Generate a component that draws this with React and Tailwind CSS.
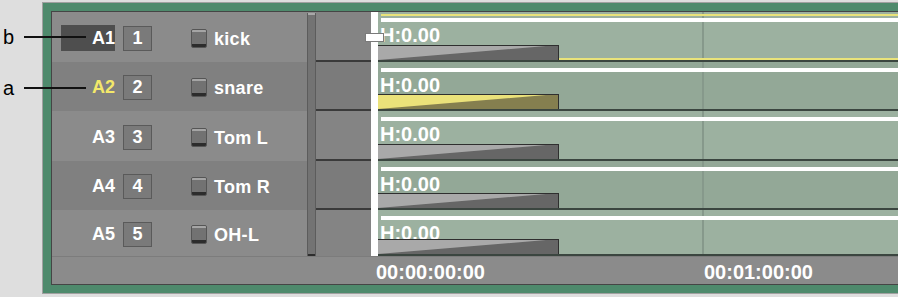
import React from 'react';

const rows = [
  { a: 'A1', n: '1', name: 'kick', h: 'h-[50px]', dark: false, sel: true, yellow: false, focus: true },
  { a: 'A2', n: '2', name: 'snare', h: 'h-[49px]', dark: true, sel: false, yellow: true, focus: false },
  { a: 'A3', n: '3', name: 'Tom L', h: 'h-[50px]', dark: false, sel: false, yellow: false, focus: false },
  { a: 'A4', n: '4', name: 'Tom R', h: 'h-[49px]', dark: true, sel: false, yellow: false, focus: false },
  { a: 'A5', n: '5', name: 'OH-L', h: 'h-[46px]', dark: false, sel: false, yellow: false, focus: false },
];

function FadeBar({ yellow }) {
  const light = yellow ? '#ebe27a' : '#a9a9a9';
  const dark = yellow ? '#857f4f' : '#666666';
  return (
    <div className="w-[181px] h-[15px] border-t border-r border-[#2f2f2f] shrink-0">
      <svg width="180" height="14" viewBox="0 0 180 14" preserveAspectRatio="none" className="block">
        <rect x="0" y="0" width="180" height="14" fill={dark} />
        <polygon points="0,0 0,14 168,0" fill={light} />
      </svg>
    </div>
  );
}

function HeaderRow({ row }) {
  return (
    <div className={`flex items-center pl-[9px] pt-[2px] ${row.h} ${row.dark ? 'bg-[#808080]' : 'bg-[#8b8b8b]'}`}>
      <div className={`w-[54px] h-[26px] flex items-center justify-end text-[18px] font-bold ${row.focus ? 'bg-[#4e4e4e]' : ''} ${row.yellow ? 'text-[#f3e86a]' : 'text-white'}`}>
        {row.a}
      </div>
      <div className="ml-[8px] w-[29px] h-[25px] border border-[#5a5a5a] bg-[#7a7a7a] flex items-center justify-center text-white text-[18px] font-bold">
        {row.n}
      </div>
      <div className="ml-[39px] w-[16px] h-[19px] rounded-[2px] border border-[#555] bg-[#727272] flex flex-col overflow-hidden">
        <div className="h-[2px] bg-[#a5a5a5]" />
        <div className="flex-1" />
        <div className="h-[3px] bg-[#2c2c2c]" />
      </div>
      <div className="ml-[7px] pt-[2px] text-white text-[18px] font-bold tracking-[0.3px]">{row.name}</div>
    </div>
  );
}

function GutterRow({ row, last }) {
  return (
    <div className={`${row.h} ${row.dark ? 'bg-[#7b7b7b]' : 'bg-[#848484]'} ${last ? '' : 'border-b-[2px] border-[#3a3a3a]'}`} />
  );
}

function Track({ row }) {
  return (
    <div className={`relative flex flex-col ${row.h} ${row.dark ? 'bg-[#93a897]' : 'bg-[#9cb1a0]'} border-b-[2px] border-[#3b4640]`}>
      <div className="absolute left-[324px] top-0 bottom-0 w-[2px] bg-[#86998b]" />
      {row.sel ? (
        <>
          <div className="relative shrink-0 mt-[2px] ml-[3px] h-[2px] bg-[#e9e37a]" />
          <div className="relative shrink-0 mt-[2px] ml-[3px] h-[4px] bg-white" />
        </>
      ) : (
        <div className="relative shrink-0 mt-[6px] ml-[3px] h-[4px] bg-white" />
      )}
      <div className="relative flex-1 min-h-0">
        <div className="ml-[2px] pt-[5px] text-white text-[20px] font-bold leading-[16px]">H:0.00</div>
      </div>
      <div className="relative shrink-0 flex items-end">
        <FadeBar yellow={row.yellow} />
        {row.sel && <div className="flex-1 h-[2px] bg-[#e9e37a]" />}
      </div>
    </div>
  );
}

export default function App() {
  return (
    <div className="relative w-[898px] h-[297px] overflow-hidden bg-[#dedede] font-['Liberation_Sans',Arial,sans-serif]">
      <div className="flex pt-[2px]">
        <div className="w-[42px] shrink-0" />
        <div className="w-[880px] h-[292px] shrink-0 border border-[#a0a0a0] bg-[#4e8a6c] p-[8px]">
          <div className="h-full border border-[#454545] bg-[#8b8b8b] flex flex-col">
            <div className="relative flex h-[244px]">
              <div className="w-[255px] shrink-0 flex flex-col">
                {rows.map((r) => <HeaderRow key={r.a} row={r} />)}
              </div>
              <div className="w-[9px] shrink-0 pt-[1px]">
                <div className="h-full flex flex-col border-x border-[#5c5c5c] bg-[#737373]">
                  <div className="h-[2px] bg-[#a8a8a8]" />
                  <div className="flex-1" />
                  <div className="h-[2px] bg-[#2e2e2e]" />
                </div>
              </div>
              <div className="w-[55px] shrink-0 flex flex-col">
                {rows.map((r, i) => <GutterRow key={r.a} row={r} last={i === rows.length - 1} />)}
              </div>
              <div className="w-[7px] shrink-0 bg-white" />
              <div className="flex-1 flex flex-col">
                {rows.map((r) => <Track key={r.a} row={r} />)}
              </div>
              <div className="absolute left-[313px] top-[21px] w-[19px] h-[9px] bg-white border border-[#7a7a7a]" />
            </div>
            <div className="flex-1 flex items-center pb-[3px] border-t border-[#7c7c7c] text-white text-[20px] font-bold">
              <span className="ml-[324px]">00:00:00:00</span>
              <span className="ml-[219px]">00:01:00:00</span>
            </div>
          </div>
        </div>
      </div>

      <div className="absolute left-[3px] top-[22px] text-[20px] text-black">b</div>
      <div className="absolute left-[24px] top-[36px] w-[62px] h-[2px] bg-[#111]" />
      <div className="absolute left-[3px] top-[73px] text-[20px] text-black">a</div>
      <div className="absolute left-[24px] top-[87px] w-[62px] h-[2px] bg-[#111]" />
    </div>
  );
}
